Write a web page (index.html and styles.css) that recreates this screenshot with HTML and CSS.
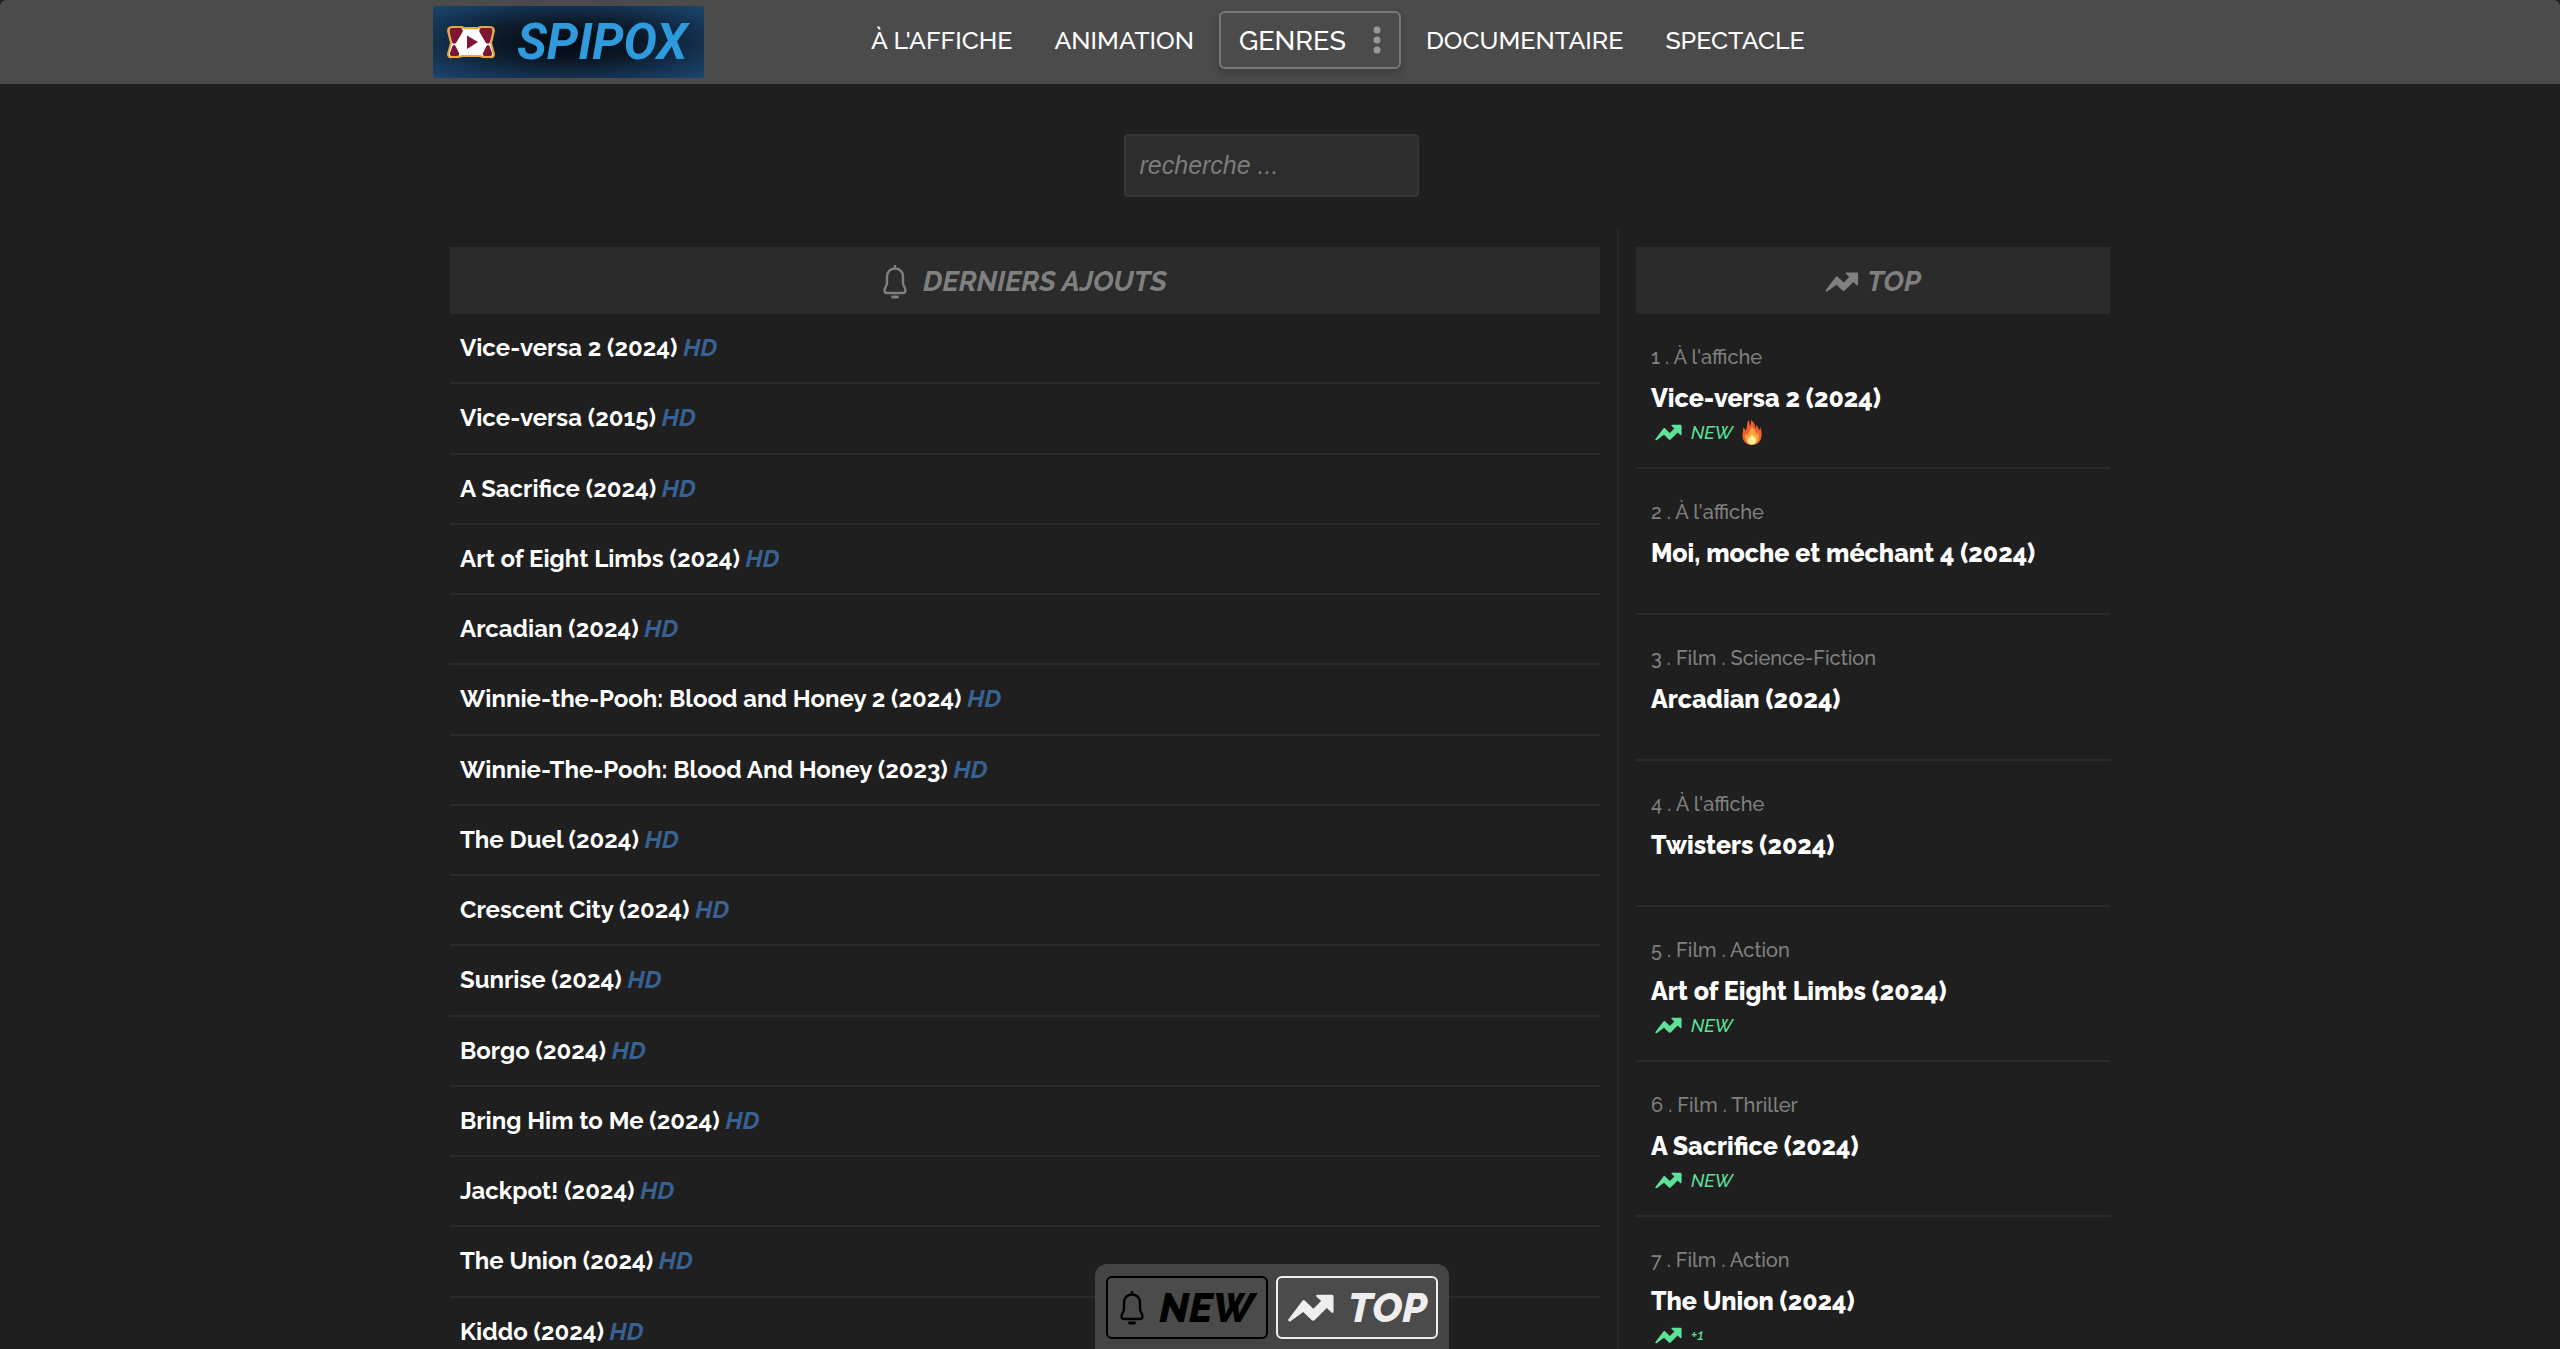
FILE: index.html
```html
<!DOCTYPE html>
<html lang="fr">
<head>
<meta charset="utf-8">
<meta name="viewport" content="width=device-width, initial-scale=1">
<title>Spipox</title>
<link rel="stylesheet" href="styles.css">
</head>
<body>
<svg class="sprite" aria-hidden="true">
  <symbol id="trend" viewBox="0 0 30 18"><path d="M0.300 16.500L9.500 4.300Q10.300 3.500 11.100 4.300L16.500 9.500L21.500 4.500L18.300 1.500Q18 0.500 19 0.500H28.500Q29.500 0.500 29.500 1.500V11.500Q29 12.600 28 11.800L25.200 9L17.400 16.700Q16.400 17.600 15.400 16.700L10 11.500L1.800 17.500Q0.300 18 0.300 16.500Z" fill="currentColor"/></symbol>
  <symbol id="bell" viewBox="0 0 24 34"><path d="M12 1V3.500M12 3.500C7 3.500 4 7 4 11.500V18C4 21 1.500 22.500 1.500 25.500C1.500 27.300 2.500 28 4 28H20C21.500 28 22.500 27.300 22.500 25.500C22.500 22.500 20 21 20 18V11.500C20 7 17 3.500 12 3.500Z" fill="none" stroke="currentColor" stroke-width="2.400" stroke-linecap="round"/><path d="M9.500 32H14.500" stroke="currentColor" stroke-width="2.800" stroke-linecap="round"/></symbol>
  <symbol id="flame" viewBox="0 0 20 25"><path d="M6.500 0C8 2 7 3.500 8 5.500C9.500 4 9 1.500 8.500 0C12.500 2 12.800 5 13.500 8C14.500 7.500 14.500 6 14 4.500C16.500 6.500 16 8.500 17 10C18 9.500 18 8 18 6.500C19.500 10 20 13 19.500 16.500C18.700 22 15 25 10 25C5 25 1 22 .5 16.500C.2 12.500 1.500 10.500 1.300 7.500C2.800 8.500 3 9.500 3.500 11C5.500 8 4.500 3.500 6.500 0Z" fill="#f0602f"/><path d="M10 7C13 10 14 12 14.300 14.500C15.500 14 15.800 13 16 12C18 18 16.500 24.500 10 24.500C4 24.500 2 19 4 13.500C4.500 14.500 5 15 6 15.500C6 12 8.500 10 10 7Z" fill="#fba63c"/><path d="M10 14C11 16.500 14.500 17.500 14 20.500C13.500 23.500 12 24.500 10 24.500C7.500 24.500 5.500 23 5.800 20.500C6 18 9 17 10 14Z" fill="#fff0a0"/></symbol>
</svg>

<header class="topbar">
  <div class="topbar-inner">
    <a class="logo" href="#">
      <svg class="logo-mark" viewBox="0 0 48 34" aria-hidden="true">
        <path d="M6 2H14Q16 2 17 3H31Q32 2 34 2H42Q47 2 47 6L44 18L47 29Q47 33 43 32H36L33 31H15L12 32H5Q1 33 1 29L4 18L1 6Q1 2 6 2Z" fill="#fff" stroke="#e9a63c" stroke-width="2"/>
        <path d="M5 3H14Q17 5 15 8L9 18Q6 20 5 17L2.500 7Q2 3 5 3ZM43 3H34Q31 5 33 8L39 18Q42 20 43 17L45.500 7Q46 3 43 3ZM5.500 21Q7 19 8.500 21L12 28Q13 31 10 31H5Q2 31 3 28ZM42.500 21Q41 19 39.500 21L36 28Q35 31 38 31H43Q46 31 45 28ZM20 10.500L31 17L20 24Z" fill="#7d1533"/>
      </svg>
      <span class="logo-text">SPIPOX</span>
    </a>
    <nav class="menu">
      <a href="#">À L'AFFICHE</a>
      <a href="#">ANIMATION</a>
      <button class="genres" type="button">GENRES
        <svg class="dots" viewBox="0 0 8 28" aria-hidden="true"><circle cx="4" cy="4" r="3.500"/><circle cx="4" cy="14" r="3.500"/><circle cx="4" cy="24" r="3.500"/></svg>
      </button>
      <a href="#">DOCUMENTAIRE</a>
      <a href="#">SPECTACLE</a>
    </nav>
  </div>
</header>

<main class="page">
  <form class="search"><input type="search" aria-label="recherche" placeholder="recherche ..."></form>
  <div class="columns">
    <section class="latest">
      <h2 class="heading"><svg class="bell" aria-hidden="true"><use href="#bell"/></svg>DERNIERS AJOUTS</h2>
      <ul class="films">
        <li><a href="#">Vice-versa 2 (2024) <em>HD</em></a></li>
        <li><a href="#">Vice-versa (2015) <em>HD</em></a></li>
        <li><a href="#">A Sacrifice (2024) <em>HD</em></a></li>
        <li><a href="#">Art of Eight Limbs (2024) <em>HD</em></a></li>
        <li><a href="#">Arcadian (2024) <em>HD</em></a></li>
        <li><a href="#">Winnie-the-Pooh: Blood and Honey 2 (2024) <em>HD</em></a></li>
        <li><a href="#">Winnie-The-Pooh: Blood And Honey (2023) <em>HD</em></a></li>
        <li><a href="#">The Duel (2024) <em>HD</em></a></li>
        <li><a href="#">Crescent City (2024) <em>HD</em></a></li>
        <li><a href="#">Sunrise (2024) <em>HD</em></a></li>
        <li><a href="#">Borgo (2024) <em>HD</em></a></li>
        <li><a href="#">Bring Him to Me (2024) <em>HD</em></a></li>
        <li><a href="#">Jackpot! (2024) <em>HD</em></a></li>
        <li><a href="#">The Union (2024) <em>HD</em></a></li>
        <li><a href="#">Kiddo (2024) <em>HD</em></a></li>
      </ul>
    </section>
    <aside class="ranking">
      <h2 class="heading"><svg class="trend" aria-hidden="true"><use href="#trend"/></svg>TOP</h2>
      <ol class="top">
        <li><span class="meta">1 . À l'affiche</span><a href="#">Vice-versa 2 (2024)</a><span class="badge"><svg class="rise" aria-hidden="true"><use href="#trend"/></svg>NEW<svg class="flame" aria-hidden="true"><use href="#flame"/></svg></span></li>
        <li><span class="meta">2 . À l'affiche</span><a href="#">Moi, moche et méchant 4 (2024)</a></li>
        <li><span class="meta">3 . Film . Science-Fiction</span><a href="#">Arcadian (2024)</a></li>
        <li><span class="meta">4 . À l'affiche</span><a href="#">Twisters (2024)</a></li>
        <li><span class="meta">5 . Film . Action</span><a href="#">Art of Eight Limbs (2024)</a><span class="badge"><svg class="rise" aria-hidden="true"><use href="#trend"/></svg>NEW</span></li>
        <li><span class="meta">6 . Film . Thriller</span><a href="#">A Sacrifice (2024)</a><span class="badge"><svg class="rise" aria-hidden="true"><use href="#trend"/></svg>NEW</span></li>
        <li><span class="meta">7 . Film . Action</span><a href="#">The Union (2024)</a><span class="badge"><svg class="rise" aria-hidden="true"><use href="#trend"/></svg><small>+1</small></span></li>
      </ol>
    </aside>
  </div>
</main>

<div class="dock">
  <button class="dock-new" type="button"><svg class="bell" aria-hidden="true"><use href="#bell"/></svg>NEW</button>
  <button class="dock-top" type="button"><svg class="trend" aria-hidden="true"><use href="#trend"/></svg>TOP</button>
</div>
</body>
</html>
```
FILE: styles.css
```css
* { box-sizing: border-box; }

html {
  background: #1f1f1f;
  scrollbar-width: none;
}

body {
  margin: 0;
  height: 100vh;
  display: flex;
  flex-direction: column;
  background: #1f1f1f;
  color: #fff;
  font-family: Raleway, Lato, sans-serif;
  font-size: 24px;
}

a { color: inherit; text-decoration: none; }
button { font-family: inherit; color: inherit; cursor: pointer; }
ul, ol { list-style: none; margin: 0; padding: 0; }
.sprite { display: none; }

.topbar {
  flex: none;
  height: 84px;
  background: #4b4b4b;
  border-radius: 6px 6px 0 0;
}
.topbar-inner {
  max-width: 1694px;
  height: 100%;
  margin: 0 auto;
  display: flex;
  align-items: center;
}
.logo {
  display: flex;
  align-items: center;
  gap: 22px;
  width: 271px;
  height: 72px;
  padding-left: 14px;
  border-radius: 2px;
  background: radial-gradient(ellipse at center, #04080d 0%, #0a1725 35%, #1c4670 100%);
}
.logo-mark { width: 48px; height: 34px; }
.logo-text {
  font: italic bold 50px Roboto, sans-serif;
  color: #2f9bdc;
}
.menu {
  display: flex;
  align-items: center;
  margin: 0 auto 0 146px;
  padding-bottom: 4px;
  font-size: 25px;
  font-weight: 500;
}
.menu a { padding: 0 21px; line-height: 56px; }
.genres {
  display: flex;
  align-items: center;
  justify-content: space-between;
  width: 182px;
  height: 58px;
  margin: 0 4px;
  padding: 0 18px;
  border: 2px solid #777;
  border-radius: 6px;
  background: transparent;
  box-shadow: 0 4px 8px rgba(0, 0, 0, .2);
  font-size: 27px;
  font-weight: 500;
}
.dots { width: 8px; height: 28px; fill: #999; }

.page {
  flex: 1;
  min-height: 0;
  width: 100%;
  max-width: 1660px;
  margin: 0 auto;
  overflow-y: auto;
  scrollbar-width: none;
}
.search {
  display: flex;
  justify-content: center;
  padding: 50px 18px 33px 0;
}
.search input {
  width: 295px;
  height: 63px;
  padding: 0 14px;
  border: 2px solid #363636;
  border-radius: 4px;
  background: #2d2d2d;
  color: #ddd;
  font: italic 25px "Liberation Sans", sans-serif;
}
.search input::placeholder { color: #7c7c7c; opacity: 1; }

.columns {
  display: grid;
  grid-template-columns: minmax(0, 1150fr) minmax(0, 493fr);
  column-gap: 17px;
}
.latest, .ranking { padding-top: 17px; }
.ranking { padding-left: 17px; border-left: 2px solid #2b2b2b; }
.heading {
  display: flex;
  align-items: center;
  justify-content: center;
  gap: 8px;
  height: 67px;
  margin: 0;
  padding-top: 2px;
  background: #2b2b2b;
  color: #808080;
  font-size: 28px;
  font-style: italic;
}
.heading .bell { width: 24px; height: 34px; margin-right: 8px; }
.heading .trend { width: 34px; height: 20px; }

.films {
  display: grid;
  grid-auto-rows: 1fr;
  min-height: 1054px;
}
.films li {
  padding: 0 10px;
  border-bottom: 2px solid #2b2b2b;
  line-height: 68px;
  font-weight: bold;
}
.films em { color: #386293; }

.top li {
  display: flex;
  flex-direction: column;
  align-items: flex-start;
  min-height: 146px;
  padding: 28px 15px 21px;
  border-bottom: 2px solid #2b2b2b;
}
.meta { color: #808080; font-size: 20px; font-weight: 500; line-height: 30px; }
.top a { margin-top: 6px; font-size: 25px; font-weight: 800; line-height: 40px; }
.badge {
  display: flex;
  align-items: center;
  gap: 9px;
  padding-left: 4px;
  height: 28px;
  color: #5ee29a;
  font-size: 18px;
  font-style: italic;
  font-weight: 500;
}
.badge small { font-size: 15px; }
.rise { width: 27px; height: 17px; }
.flame { width: 20px; height: 25px; }

.dock {
  position: fixed;
  bottom: 0;
  left: 50%;
  transform: translateX(-50%);
  display: flex;
  gap: 8px;
  margin-left: -8px;
  padding: 12px 11px 10px;
  border-radius: 12px 12px 0 0;
  background: #444;
}
.dock button {
  display: flex;
  align-items: center;
  justify-content: center;
  width: 162px;
  height: 63px;
  padding: 0;
  border: 2px solid;
  border-radius: 6px;
  background: #4b4b4b;
  font-size: 41px;
  font-style: italic;
  font-weight: 800;
}
.dock .dock-new { gap: 15px; color: #000; }
.dock .dock-top { gap: 13px; color: #eee; }
.dock .bell { width: 24px; height: 34px; }
.dock .trend { width: 48px; height: 28px; }
```
